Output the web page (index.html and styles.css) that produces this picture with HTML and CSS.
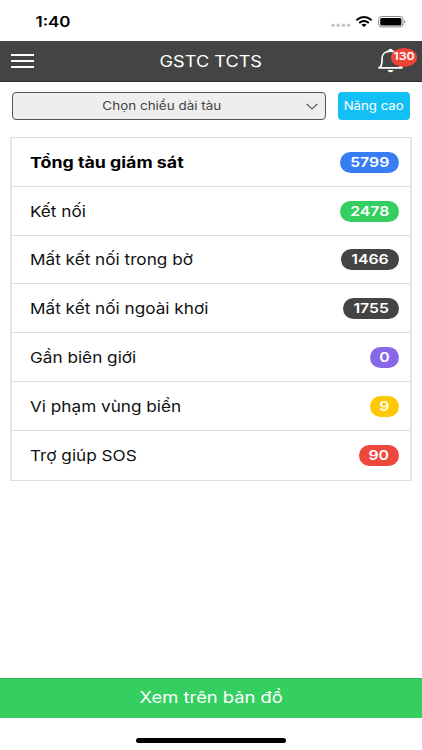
FILE: index.html
```html
<!DOCTYPE html>
<html lang="vi">
<head>
    <meta charset="UTF-8">
    <title>GSTC TCTS</title>
    <link rel="stylesheet" href="styles.css">
</head>
<body>
    <div class="status-bar">
        <span class="time"><span class="wide">1:40</span></span>
        <svg class="status-icons" width="76" height="14" viewBox="0 0 76 14">
            <g fill="#c4c4c4">
                <circle cx="3" cy="10.3" r="1.8"/>
                <circle cx="8.2" cy="10.3" r="1.8"/>
                <circle cx="13.4" cy="10.3" r="1.8"/>
                <circle cx="18.6" cy="10.3" r="1.8"/>
            </g>
            <g fill="none" stroke="#000" stroke-width="2">
                <path d="M26.3 5.2Q34 -1.2 41.7 5.2"/>
                <path d="M29.2 8Q34 4 38.8 8"/>
            </g>
            <path d="M31.4 9.7Q34 7.8 36.6 9.7L34 12Z"/>
            <rect x="48.6" y="1.5" width="24.4" height="10.4" rx="3" fill="#fff" stroke="#888"/>
            <rect x="50.2" y="3" width="21.2" height="7.4" rx="1.5"/>
            <path d="M74.2 5Q76.4 6.7 74.2 8.4Z" fill="#777"/>
        </svg>
    </div>

    <header class="navbar">
        <svg class="menu" width="23" height="16" viewBox="0 0 23 16" stroke="#fff" stroke-width="2">
            <path d="M0 2H23M0 8H23M0 14H23"/>
        </svg>
        <h1><span class="wide">GSTC TCTS</span></h1>
        <div class="bell">
            <svg width="26" height="26" viewBox="0 0 26 26">
                <path d="M1 19.8Q4 18.2 4 13V10.5C4 6 7.5 3.2 12.5 3.2S21 6 21 10.5V13Q21 18.2 24 19.8Z" fill="none" stroke="#fff" stroke-width="1.7" stroke-linejoin="round"/>
                <ellipse cx="12.5" cy="2.4" rx="2.2" ry="1.7" fill="#fff"/>
                <path d="M9.5 22H15.5Q14.8 24.3 12.5 24.3T9.5 22Z" fill="#fff"/>
            </svg>
            <span class="bell-count"><span class="wide">130</span></span>
        </div>
    </header>

    <div class="filter">
        <div class="select">
            <span class="wide">Chọn chiều dài tàu</span>
            <svg width="12" height="7" viewBox="0 0 12 7" fill="none" stroke="#444" stroke-width="1.1">
                <path d="M0.5 0.8L6 5.8L11.5 0.8"/>
            </svg>
        </div>
        <button class="advanced"><span class="wide">Nâng cao</span></button>
    </div>

    <ul class="list">
        <li class="total"><span class="wide">Tổng tàu giám sát</span><b class="badge blue"><span class="wide">5799</span></b></li>
        <li><span class="wide">Kết nối</span><b class="badge green"><span class="wide">2478</span></b></li>
        <li><span class="wide">Mất kết nối trong bờ</span><b class="badge dark w58"><span class="wide">1466</span></b></li>
        <li><span class="wide">Mất kết nối ngoài khơi</span><b class="badge dark w56"><span class="wide">1755</span></b></li>
        <li><span class="wide">Gần biên giới</span><b class="badge purple one"><span class="wide">0</span></b></li>
        <li><span class="wide">Vi phạm vùng biển</span><b class="badge yellow one"><span class="wide">9</span></b></li>
        <li><span class="wide">Trợ giúp SOS</span><b class="badge red two"><span class="wide">90</span></b></li>
    </ul>

    <footer class="map-button"><span class="wide">Xem trên bản đồ</span></footer>
    <div class="home-bar"></div>
</body>
</html>
```

FILE: styles.css
```css
* {
    box-sizing: border-box;
}

body {
    margin: 0;
    height: 750px;
    display: flex;
    flex-direction: column;
    background: #fff;
    color: #111;
    font-family: Inter, "Liberation Sans", sans-serif;
    overflow: hidden;
}

/* wide letters */
.wide {
    display: inline-block;
    white-space: nowrap;
    transform: scaleX(1.17);
}

/* Status bar */
.status-bar {
    height: 41px;
    display: flex;
    justify-content: space-between;
    align-items: center;
    padding: 2px 16px 0 38px;
}

.time {
    font-size: 14.5px;
    font-weight: 600;
    color: #000;
}

/* Top bar */
.navbar {
    height: 41px;
    display: flex;
    justify-content: space-between;
    align-items: center;
    padding: 0 18px 0 11px;
    background: #444;
    border-bottom: 1px solid #2c2c2c;
    color: #fff;
}

.navbar h1 {
    margin: 0 0 0 10px;
    font-size: 15.5px;
    font-weight: 400;
}

.bell {
    position: relative;
    width: 26px;
    height: 26px;
}

.bell-count {
    position: absolute;
    left: 13px;
    top: 0;
    width: 26px;
    height: 19px;
    border-radius: 50%;
    background: #ee4438;
    font-size: 10.5px;
    font-weight: 600;
    line-height: 18px;
    text-align: center;
}

/* Filter row */
.filter {
    display: flex;
    gap: 12px;
    padding: 10px 12px 0;
}

.select {
    width: 314px;
    height: 28px;
    display: flex;
    justify-content: space-between;
    align-items: center;
    padding: 0 7px 0 98px;
    border: 1px solid #555;
    border-radius: 4px;
    background: #eee;
    color: #444;
    font-size: 11.5px;
}

.advanced {
    width: 72px;
    height: 28px;
    padding: 0;
    border: none;
    border-radius: 4px;
    background: #13c0f5;
    color: #fff;
    font: 11.3px Inter, "Liberation Sans", sans-serif;
}

/* List of ships */
.list {
    margin: 17px 10px 0;
    padding: 0;
    list-style: none;
    border: 1px solid #ddd;
    border-width: 1px 2px;
    border-color: #ddd #e6e6e6;
}

.list li {
    height: 48.8px;
    display: flex;
    justify-content: space-between;
    align-items: center;
    padding: 1px 11px 0 18px;
    border-bottom: 1px solid #ddd;
    font-size: 15px;
}

.list li:last-child {
    border-bottom: none;
}

.list li > .wide {
    transform: scaleX(1.145);
    transform-origin: left;
}

.list .total {
    font-weight: 700;
    color: #000;
}

.list .total > .wide {
    transform: scaleX(1.185);
}

.badge {
    width: 59px;
    height: 21px;
    border-radius: 10.5px;
    color: #fff;
    font-size: 13.5px;
    font-weight: 600;
    line-height: 21px;
    text-align: center;
}

.w58 { width: 58px; }
.w56 { width: 56px; }
.two { width: 40px; }
.one { width: 29px; }

.blue { background: #397df4; }
.green { background: #34cf60; }
.dark { background: #444; }
.purple { background: #8768e8; }
.yellow { background: #ffc805; }
.red { background: #ee473c; }

/* Bottom */
.map-button {
    height: 40px;
    margin-top: auto;
    background: #34cf60;
    border-top: 1px solid #32b458;
    color: #fff;
    font-size: 15.7px;
    line-height: 38px;
    text-align: center;
}

.home-bar {
    width: 150px;
    height: 5px;
    margin: 20px auto 7px;
    border-radius: 3px;
    background: #000;
}
```
